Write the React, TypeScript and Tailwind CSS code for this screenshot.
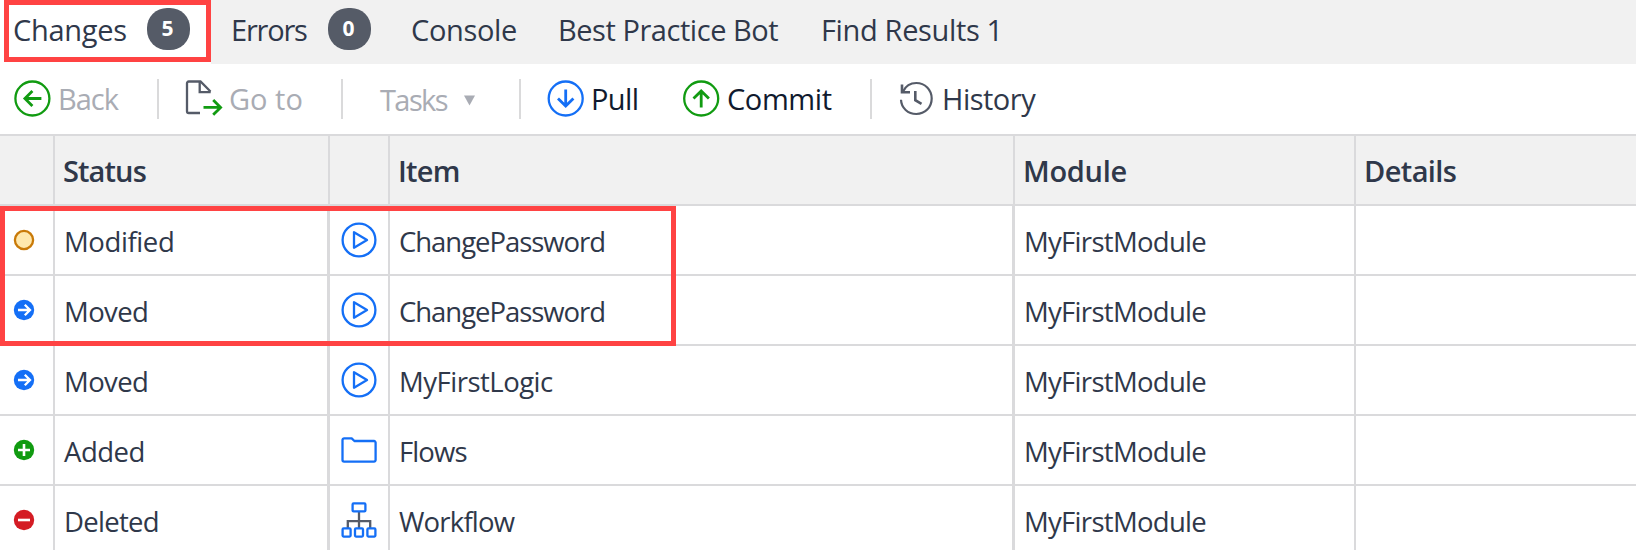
import React from "react";

type Status = "Modified" | "Moved" | "Added" | "Deleted";
type Kind = "microflow" | "folder" | "workflow";

const BLUE = "#146ff6";
const GREEN = "#119b11";
const SLATE = "#555b68";

function StatusIcon({ status }: { status: Status }) {
  return (
    <svg width="22" height="22" viewBox="0 0 22 22" fill="none" strokeWidth="2.3">
      {status === "Modified" && <circle cx="11" cy="11" r="9.1" fill="#ffe8ad" stroke="#c97a08" />}
      {status === "Moved" && (
        <>
          <circle cx="11" cy="11" r="10.2" fill={BLUE} />
          <path d="M5 11h11.5M11.8 5.8L17 11l-5.2 5.2" stroke="#fff" />
        </>
      )}
      {status === "Added" && (
        <>
          <circle cx="11" cy="11" r="10.2" fill={GREEN} />
          <path d="M5 11h12M11 5v12" stroke="#fff" strokeWidth="2.6" />
        </>
      )}
      {status === "Deleted" && (
        <>
          <circle cx="11" cy="11" r="10.2" fill="#d41c24" />
          <path d="M5 11h12" stroke="#fff" strokeWidth="2.6" />
        </>
      )}
    </svg>
  );
}

function KindIcon({ kind }: { kind: Kind }) {
  return (
    <svg width="36" height="36" viewBox="0 0 36 36" fill="none" stroke={BLUE} strokeWidth="2.3" strokeLinejoin="round">
      {kind === "microflow" && (
        <>
          <circle cx="18" cy="18" r="16.4" />
          <path d="M13 10.2v15.6L26 18z" />
        </>
      )}
      {kind === "folder" && (
        <path d="M1.5 28V8a1.6 1.6 0 0 1 1.6-1.6h7.6L13.4 9H33a1.6 1.6 0 0 1 1.6 1.6V28A1.6 1.6 0 0 1 33 29.6H3.1A1.6 1.6 0 0 1 1.5 28z" />
      )}
      {kind === "workflow" && (
        <>
          <path d="M18 10v16M6.8 26v-6.8h22.4V26" stroke={SLATE} strokeLinejoin="miter" />
          <rect x="11.6" y="1.4" width="12.8" height="8" rx="1" />
          <rect x="1.6" y="26.4" width="8" height="8.2" rx="1" />
          <rect x="14" y="26.4" width="8" height="8.2" rx="1" />
          <rect x="26.4" y="26.4" width="8" height="8.2" rx="1" />
        </>
      )}
    </svg>
  );
}

function BackIcon() {
  return (
    <svg width="38" height="38" viewBox="0 0 38 38" fill="none" stroke={GREEN} strokeWidth="2.3">
      <circle cx="19.4" cy="18.5" r="17" />
      <path d="M28.400 18.500H11.900M19.400 11l-7.500 7.500 7.500 7.500" strokeWidth="2.8" />
    </svg>
  );
}

function GoToIcon() {
  return (
    <svg width="39" height="38" viewBox="0 0 39 38" fill="none" stroke={SLATE} strokeWidth="2.3">
      <path d="M16 33H4.7A1.7 1.7 0 0 1 3 31.3V3.2A1.7 1.7 0 0 1 4.7 1.5H16.5L26.500 11.500" />
      <path d="M15.7 1.8v10.4h11" />
      <path d="M19.500 27.400h17M29.200 20l7.400 7.400-7.400 7.400" stroke={GREEN} strokeWidth="2.800" />
    </svg>
  );
}

function PullIcon() {
  return (
    <svg width="38" height="38" viewBox="0 0 38 38" fill="none" stroke={BLUE} strokeWidth="2.3">
      <circle cx="18.7" cy="18.5" r="17" />
      <path d="M18.700 9.500V26M11 18.500l7.700 7.500 7.700-7.500" strokeWidth="2.8" />
    </svg>
  );
}

function CommitIcon() {
  return (
    <svg width="38" height="38" viewBox="0 0 38 38" fill="none" stroke={GREEN} strokeWidth="2.3">
      <circle cx="19.2" cy="18.5" r="17" />
      <path d="M19.200 27.500V11M11.500 18.500l7.700-7.500 7.700 7.500" strokeWidth="2.8" />
    </svg>
  );
}

function HistoryIcon() {
  return (
    <svg width="36" height="38" viewBox="0 0 36 38" fill="none" stroke={SLATE} strokeWidth="2.2">
      <path d="M2 19.800C2.300 28 9 34 17.300 34 26 34 32.700 27.300 32.700 18.500S26 3 17.300 3C11.500 3 6.500 6.300 4 11.500" />
      <path d="M3 4.500v7.700h8M16.300 11v9.200l6.200 3.600" strokeWidth="2.6" />
    </svg>
  );
}

function Badge({ count }: { count: number }) {
  return (
    <span className="mt-2 flex h-[42px] w-[43px] shrink-0 justify-center rounded-[20px] bg-[#555b67] pr-[2px] text-[21px] leading-[40px] font-bold text-white">
      {count}
    </span>
  );
}

function Separator() {
  return <span className="h-10 w-0.5 shrink-0 bg-[#dadadb]" />;
}

const rows: { status: Status; statusClass: string; kind: Kind; item: string; itemClass: string }[] = [
  { status: "Modified", statusClass: "tracking-[-0.4px]", kind: "microflow", item: "ChangePassword", itemClass: "tracking-[-1.05px]" },
  { status: "Moved", statusClass: "tracking-[-0.6px]", kind: "microflow", item: "ChangePassword", itemClass: "tracking-[-1.05px]" },
  { status: "Moved", statusClass: "tracking-[-0.6px]", kind: "microflow", item: "MyFirstLogic", itemClass: "tracking-[-0.5px]" },
  { status: "Added", statusClass: "tracking-[-0.5px]", kind: "folder", item: "Flows", itemClass: "tracking-[-0.9px]" },
  { status: "Deleted", statusClass: "tracking-[-0.7px]", kind: "workflow", item: "Workflow", itemClass: "tracking-[-0.8px]" },
];

export default function App() {
  return (
    <div className="relative h-[550px] w-[1636px] overflow-hidden bg-white font-['Open_Sans',sans-serif] text-[29px] whitespace-nowrap text-[#2f384a]">
      <nav className="flex h-16 bg-[#f1f1f1] leading-[60px]">
        <div className="relative flex w-[211px] bg-white pl-[13px]">
          <span className="w-[134px] tracking-[-0.3px]">Changes</span>
          <Badge count={5} />
          <div className="absolute top-0 left-1 h-[62px] w-[207px] border-[5px] border-[#ff4343]" />
        </div>
        <div className="flex w-[200px] pl-5">
          <span className="w-[97px] tracking-[-1.2px]">Errors</span>
          <Badge count={0} />
        </div>
        <span className="w-[147px] tracking-[-0.35px]">Console</span>
        <span className="w-[263px] tracking-[-0.45px]">Best Practice Bot</span>
        <span className="tracking-[-0.35px]">Find Results 1</span>
      </nav>

      <div className="flex h-[70px] items-center leading-[70px] text-[#a9acb4]">
        <div className="flex w-[157px] items-center pl-[13px]">
          <BackIcon />
          <span className="ml-[7px] tracking-[-1px]">Back</span>
        </div>
        <Separator />
        <div className="flex w-[182px] items-center pl-[25px]">
          <GoToIcon />
          <span className="ml-[6px]">Go to</span>
        </div>
        <Separator />
        <div className="flex w-[176px] items-center pl-[37px]">
          <span className="w-[84px] pt-px tracking-[-1.6px]">Tasks</span>
          <svg width="11" height="11" viewBox="0 0 11 11" className="mt-0.5">
            <path d="M0 .5h11L5.500 10.500z" fill="#a9acb4" />
          </svg>
        </div>
        <Separator />
        <div className="flex w-[161px] items-center pl-[26px] text-[#101a2e]">
          <PullIcon />
          <span className="ml-[6px] tracking-[-0.6px]">Pull</span>
        </div>
        <div className="flex w-[188px] items-center text-[#101a2e]">
          <CommitIcon />
          <span className="ml-[7px] tracking-[-0.4px]">Commit</span>
        </div>
        <Separator />
        <div className="flex items-center pl-[27px] text-[#2f384a]">
          <HistoryIcon />
          <span className="ml-[7px] tracking-[-0.5px]">History</span>
        </div>
      </div>

      <div className="grid h-[72px] grid-cols-[55px_275px_60px_625px_341px_280px] border-y-2 border-[#dadadc] bg-[#f1f1f1] leading-[69px] font-semibold *:border-r-2 *:border-[#dadadc] *:last:border-r-0">
        <span />
        <span className="pl-2 tracking-[-0.9px]">Status</span>
        <span />
        <span className="pl-2 tracking-[-0.8px]">Item</span>
        <span className="pl-2 tracking-[-0.3px]">Module</span>
        <span className="pl-2 tracking-[-0.6px]">Details</span>
      </div>

      <div className="relative text-[27.5px] leading-[72px]">
        {rows.map((row, i) => (
          <div
            key={i}
            className="grid h-[70px] grid-cols-[55px_275px_60px_625px_341px_280px] border-b-2 border-[#dadadc] *:h-[68px] *:border-r-2 *:border-[#dadadc] *:last:border-r-0"
          >
            <span className="flex items-center pl-[13px]">
              <StatusIcon status={row.status} />
            </span>
            <span className="border-r-[3px]! pl-[9px]">
              <span className={row.statusClass}>{row.status}</span>
            </span>
            <span className="flex items-center pl-[11px]">
              <KindIcon kind={row.kind} />
            </span>
            <span className="border-r-[3px]! pl-[9px]">
              <span className={row.itemClass}>{row.item}</span>
            </span>
            <span className="pl-[9px] tracking-[-0.7px]">MyFirstModule</span>
            <span />
          </div>
        ))}
        <div className="absolute top-0 left-0 h-[140px] w-[676px] border-[5px] border-[#ff4343]" />
      </div>
    </div>
  );
}
